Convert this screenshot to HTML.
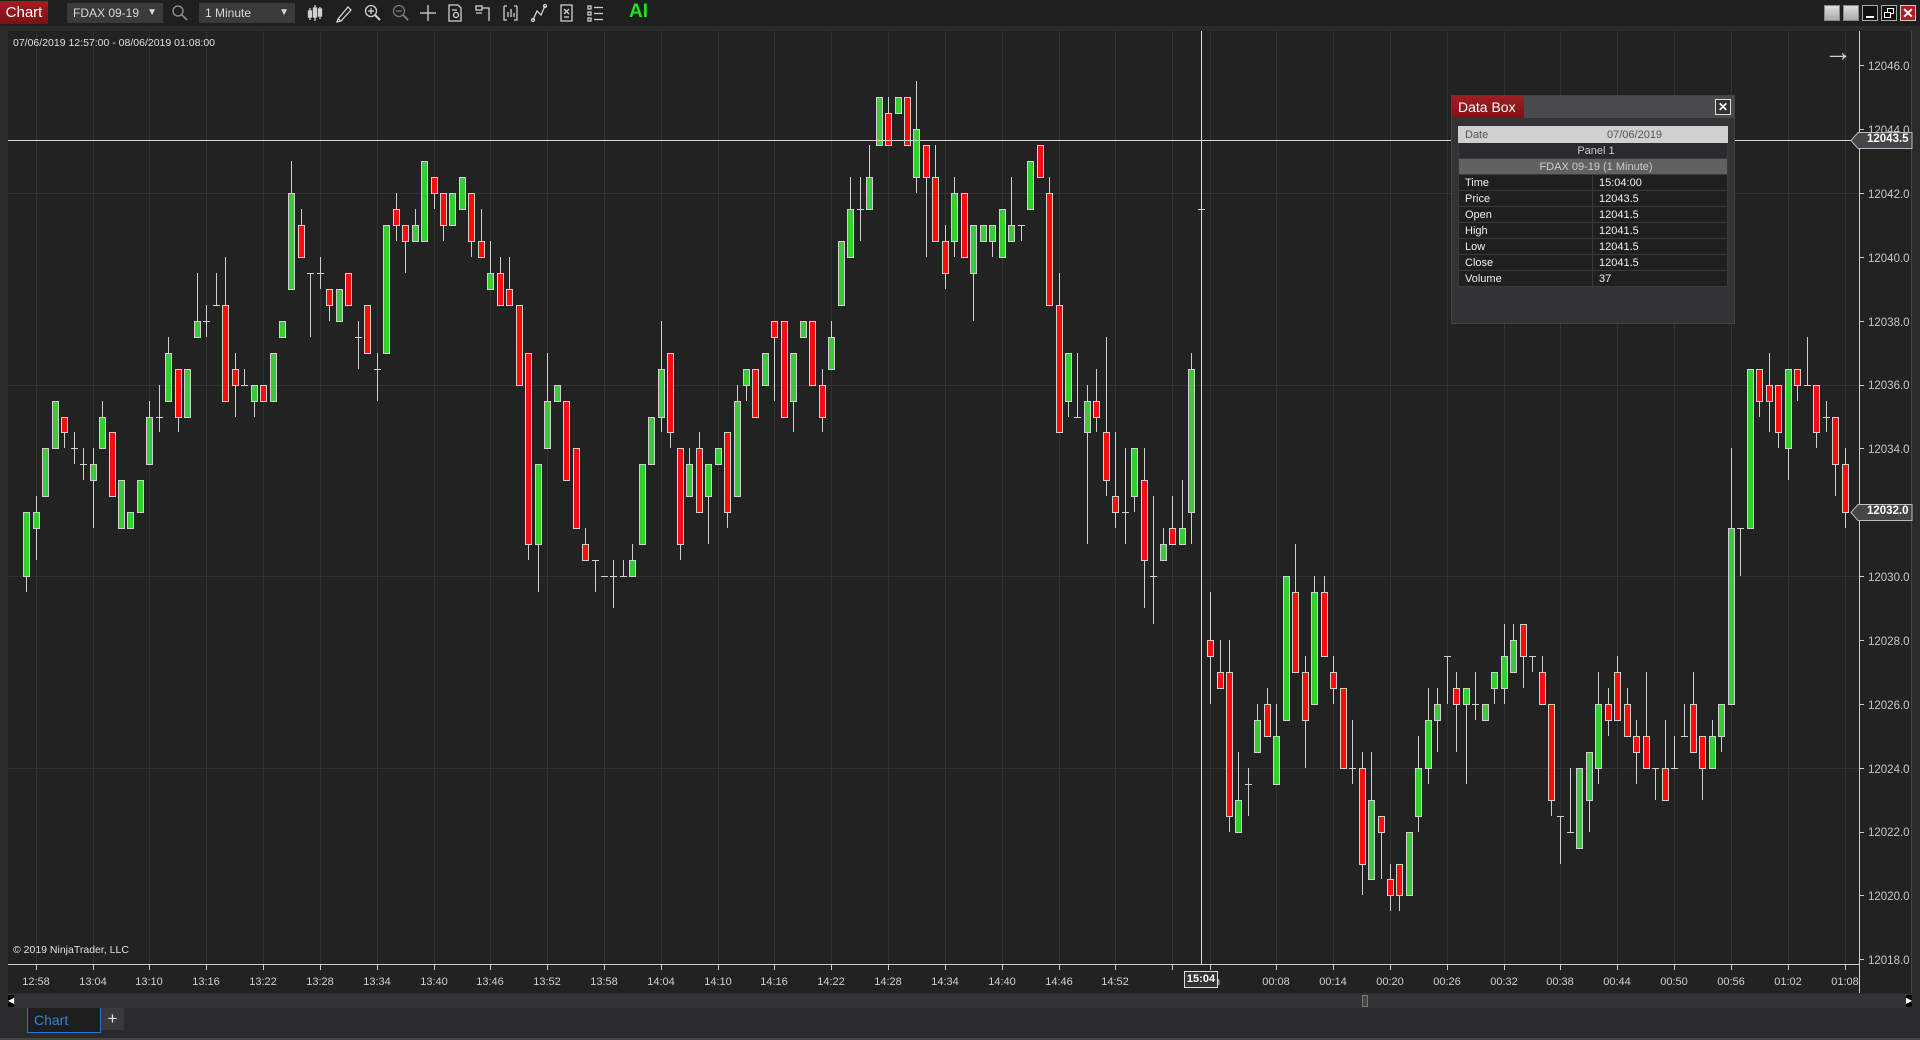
<!DOCTYPE html>
<html><head><meta charset="utf-8"><style>
*{margin:0;padding:0;box-sizing:border-box}
body{width:1920px;height:1040px;overflow:hidden;background:#2b2b2d;font-family:"Liberation Sans",sans-serif;position:relative}
.a{position:absolute}
#tb{left:0;top:0;width:1920px;height:26px;background:#1f1f1f}
.combo{background:#3a3a3c;color:#d8d8d8;font-size:12px;height:20px;line-height:20px;padding-left:6px;top:3px}
.combo span{position:absolute;right:6px;top:0;font-size:10px}
#plot{left:8px;top:31px;width:1904px;height:962px;background:#222222}
.tl{width:50px;text-align:center;font-size:11px;color:#d0d0d0;top:976px}
.pl{left:1868px;font-size:11.5px;color:#c8c8c8;margin-top:3px}
.wb{top:5px;width:16px;height:16px;border:1px solid #888}
table{border-collapse:collapse}
td{border:1px solid #3a3a3c;font-size:11px;height:16px;color:#f0f0f0;padding:0 0 0 6px}
</style></head><body>
<div id="tb" class="a"></div>
<div class="a" style="left:0;top:1px;width:48px;height:23px;background:linear-gradient(#a01e22,#7a1216);color:#fff;font-size:15px;line-height:23px;text-align:center">Chart</div>
<div class="a combo" style="left:67px;width:96px">FDAX 09-19<span>&#9660;</span></div>
<svg class="a" style="left:171px;top:4px" width="18" height="18" viewBox="0 0 18 18"><circle cx="7" cy="7" r="5" fill="none" stroke="#999" stroke-width="1.3"/><line x1="11" y1="11" x2="16" y2="16" stroke="#999" stroke-width="1.5"/></svg>
<div class="a combo" style="left:199px;width:96px">1 Minute<span>&#9660;</span></div>
<svg class="a" style="left:306px;top:3px" width="310" height="20" viewBox="0 0 310 20" fill="none" stroke="#d0d0d0" stroke-width="1.3">
<g><line x1="4" y1="5" x2="4" y2="17"/><rect x="2.5" y="8" width="3" height="6" fill="#d0d0d0"/><line x1="9" y1="2" x2="9" y2="18"/><rect x="7.5" y="5" width="3" height="9" fill="#d0d0d0"/><line x1="14" y1="4" x2="14" y2="16"/><rect x="12.5" y="6" width="3" height="7" fill="#d0d0d0"/></g>
<g transform="translate(28,0)"><path d="M4 16 L14 4 L17 7 L7 18 Z M4 16 L3 19 L7 18"/></g>
<g transform="translate(57,0)"><circle cx="8" cy="8" r="5.5"/><line x1="12" y1="12" x2="17" y2="17" stroke-width="2"/><line x1="5" y1="8" x2="11" y2="8"/><line x1="8" y1="5" x2="8" y2="11"/></g>
<g transform="translate(85,0)" stroke="#777"><circle cx="8" cy="8" r="5.5"/><line x1="12" y1="12" x2="17" y2="17" stroke-width="2"/><line x1="5" y1="8" x2="11" y2="8"/></g>
<g transform="translate(113,0)"><line x1="9" y1="2" x2="9" y2="18"/><line x1="1" y1="10" x2="17" y2="10"/></g>
<g transform="translate(140,0)"><path d="M3 2 H12 L15 5 V18 H3 Z"/><circle cx="10" cy="12" r="2.5"/><line x1="6" y1="7" x2="11" y2="7"/></g>
<g transform="translate(168,0)"><rect x="2" y="3" width="6" height="4"/><path d="M8 5 H15 V18 M2 10 H8"/></g>
<g transform="translate(196,0)"><path d="M2 3 V17 H5 M15 3 V17 H12 M2 3 H5 M15 3 H12"/><line x1="6" y1="14" x2="6" y2="9"/><line x1="9" y1="14" x2="9" y2="6"/><line x1="12" y1="14" x2="12" y2="10"/></g>
<g transform="translate(224,0)"><path d="M3 17 L7 8 L11 12 L15 3"/><circle cx="3" cy="17" r="1.5"/><circle cx="15" cy="3" r="1.5"/></g>
<g transform="translate(252,0)"><path d="M3 2 H14 V18 H3 Z"/><path d="M6 6 L11 11 M11 6 L6 11"/><line x1="6" y1="14" x2="11" y2="14"/></g>
<g transform="translate(280,0)"><rect x="2" y="3" width="3" height="3"/><rect x="2" y="9" width="3" height="3"/><rect x="2" y="15" width="3" height="3"/><line x1="8" y1="4.5" x2="17" y2="4.5"/><line x1="8" y1="10.5" x2="17" y2="10.5"/><line x1="8" y1="16.5" x2="17" y2="16.5"/></g>
</svg>
<div class="a" style="left:629px;top:1px;color:#22e022;font-size:19px;font-weight:bold">AI</div>
<div class="a wb" style="left:1824px;background:linear-gradient(#ddd,#aaa)"></div>
<div class="a wb" style="left:1843px;background:linear-gradient(#ddd,#aaa)"></div>
<div class="a wb" style="left:1862px;background:#111;border-color:#aaa"><div class="a" style="left:3px;top:10px;width:8px;height:2px;background:#fff"></div></div>
<div class="a wb" style="left:1881px;background:#111;border-color:#aaa"><div class="a" style="left:5px;top:2px;width:7px;height:6px;border:1.5px solid #fff"></div><div class="a" style="left:2px;top:6px;width:7px;height:6px;border:1.5px solid #fff;background:#111"></div></div>
<div class="a wb" style="left:1900px;background:#b01e22;border-color:#ccc;color:#fff;font-size:14px;font-weight:bold;line-height:14px;text-align:center">&#10005;</div>

<div id="plot" class="a"></div>
<svg id="ch" class="a" style="left:0;top:0" width="1920" height="1040"></svg>

<div class="a" style="left:13px;top:37px;font-size:10.5px;color:#e0e0e0">07/06/2019 12:57:00 - 08/06/2019 01:08:00</div>
<div class="a" style="left:13px;top:944px;font-size:10.5px;color:#e0e0e0">© 2019 NinjaTrader, LLC</div>
<div class="a" style="left:1824px;top:36px;font-size:28px;color:#d0d0d0">&#8594;</div>

<div class="a pl" style="top:58px">12046.0</div>
<div class="a pl" style="top:122px">12044.0</div>
<div class="a pl" style="top:186px">12042.0</div>
<div class="a pl" style="top:250px">12040.0</div>
<div class="a pl" style="top:314px">12038.0</div>
<div class="a pl" style="top:377px">12036.0</div>
<div class="a pl" style="top:441px">12034.0</div>
<div class="a pl" style="top:569px">12030.0</div>
<div class="a pl" style="top:633px">12028.0</div>
<div class="a pl" style="top:697px">12026.0</div>
<div class="a pl" style="top:761px">12024.0</div>
<div class="a pl" style="top:824px">12022.0</div>
<div class="a pl" style="top:888px">12020.0</div>
<div class="a pl" style="top:952px">12018.0</div>

<svg class="a" style="left:1850px;top:131px" width="64" height="19"><path d="M1 9.5 L8 1.5 H62 V17.5 H8 Z" fill="#444449" stroke="#bbb"/></svg>
<div class="a" style="left:1867px;top:133px;font-size:11.5px;color:#fff;font-weight:bold">12043.5</div>
<svg class="a" style="left:1850px;top:503px" width="64" height="19"><path d="M1 9.5 L8 1.5 H62 V17.5 H8 Z" fill="#444449" stroke="#bbb"/></svg>
<div class="a" style="left:1867px;top:505px;font-size:11.5px;color:#fff;font-weight:bold">12032.0</div>

<div class="a tl" style="left:11px">12:58</div>
<div class="a tl" style="left:68px">13:04</div>
<div class="a tl" style="left:124px">13:10</div>
<div class="a tl" style="left:181px">13:16</div>
<div class="a tl" style="left:238px">13:22</div>
<div class="a tl" style="left:295px">13:28</div>
<div class="a tl" style="left:352px">13:34</div>
<div class="a tl" style="left:409px">13:40</div>
<div class="a tl" style="left:465px">13:46</div>
<div class="a tl" style="left:522px">13:52</div>
<div class="a tl" style="left:579px">13:58</div>
<div class="a tl" style="left:636px">14:04</div>
<div class="a tl" style="left:693px">14:10</div>
<div class="a tl" style="left:749px">14:16</div>
<div class="a tl" style="left:806px">14:22</div>
<div class="a tl" style="left:863px">14:28</div>
<div class="a tl" style="left:920px">14:34</div>
<div class="a tl" style="left:977px">14:40</div>
<div class="a tl" style="left:1034px">14:46</div>
<div class="a tl" style="left:1090px">14:52</div>
<div class="a tl" style="left:1214px;width:20px;text-align:left">n</div>
<div class="a tl" style="left:1184px;width:34px;top:971px;height:17px;line-height:15px;background:#333;border:1px solid #ddd;color:#fff;font-weight:bold">15:04</div>
<div class="a tl" style="left:1251px">00:08</div>
<div class="a tl" style="left:1308px">00:14</div>
<div class="a tl" style="left:1365px">00:20</div>
<div class="a tl" style="left:1422px">00:26</div>
<div class="a tl" style="left:1479px">00:32</div>
<div class="a tl" style="left:1535px">00:38</div>
<div class="a tl" style="left:1592px">00:44</div>
<div class="a tl" style="left:1649px">00:50</div>
<div class="a tl" style="left:1706px">00:56</div>
<div class="a tl" style="left:1763px">01:02</div>
<div class="a tl" style="left:1820px">01:08</div>

<div class="a" style="left:8px;top:994px;width:1904px;height:14px;background:#333336"></div>
<div class="a" style="left:8px;top:995px;width:6px;height:12px;background:#000;color:#fff;font-size:8px;line-height:12px">&#9664;</div>
<div class="a" style="left:1906px;top:995px;width:6px;height:12px;background:#000;color:#fff;font-size:8px;line-height:12px">&#9654;</div>
<div class="a" style="left:1362px;top:995px;width:6px;height:12px;border:1px solid #777;background:#444"></div>

<div class="a" style="left:27px;top:1008px;width:74px;height:25px;border:1px solid #1e7ad6;border-top:none;background:#1e1e1e;color:#2a8ae0;font-size:14px;line-height:24px;padding-left:6px">Chart</div>
<div class="a" style="left:101px;top:1008px;width:23px;height:22px;background:#3a3a3c;color:#ddd;font-size:17px;line-height:22px;text-align:center">+</div>
<div class="a" style="left:0;top:1038px;width:1920px;height:2px;background:#444"></div>

<div class="a" style="left:1451px;top:95px;width:284px;height:229px;background:#333336;border:1px solid #444">
 <div class="a" style="left:0;top:0;width:282px;height:22px;background:#4a4a4c"></div>
 <div class="a" style="left:0;top:0;width:72px;height:22px;background:linear-gradient(#a01e22,#7a1216);color:#fff;font-size:14px;line-height:22px;padding-left:6px">Data Box</div>
 <div class="a" style="left:263px;top:3px;width:16px;height:16px;border:1px solid #ddd;background:#333;color:#fff;font-size:12px;line-height:14px;text-align:center;font-weight:bold">&#10005;</div>
 <table class="a" style="left:6px;top:30px;width:270px">
  <tr><td style="background:#d0d0d0;color:#555;border-color:#d0d0d0;width:134px">Date</td><td style="background:#d0d0d0;color:#555;border-color:#d0d0d0;padding-left:14px">07/06/2019</td></tr>
  <tr><td colspan="2" style="background:#2a2a2c;color:#ccc;text-align:center">Panel 1</td></tr>
  <tr><td colspan="2" style="background:#616161;color:#ccc;text-align:center">FDAX 09-19 (1 Minute)</td></tr>
  <tr><td style="background:#1f1f1f">Time</td><td style="background:#1f1f1f">15:04:00</td></tr>
  <tr><td style="background:#1f1f1f">Price</td><td style="background:#1f1f1f">12043.5</td></tr>
  <tr><td style="background:#1f1f1f">Open</td><td style="background:#1f1f1f">12041.5</td></tr>
  <tr><td style="background:#1f1f1f">High</td><td style="background:#1f1f1f">12041.5</td></tr>
  <tr><td style="background:#1f1f1f">Low</td><td style="background:#1f1f1f">12041.5</td></tr>
  <tr><td style="background:#1f1f1f">Close</td><td style="background:#1f1f1f">12041.5</td></tr>
  <tr><td style="background:#1f1f1f">Volume</td><td style="background:#1f1f1f">37</td></tr>
 </table>
</div>

<script>
var D=[[30,32,29.5,32],[31.5,32.5,30.5,32],[32.5,34,32.5,34],[34,35.5,34,35.5],[35,35,34,34.5],[34,34.5,33.5,34],[33.5,34,33,33.5],[33,34,31.5,33.5],[34,35.5,34,35],[34.5,34.5,32.5,32.5],
[31.5,33,31.5,33],[31.5,32,31.5,32],[32,33,32,33],[33.5,35.5,33.5,35],[35,36,34.5,35],[35.5,37.5,35.5,37],[36.5,36.5,34.5,35],[35,36.5,35,36.5],[37.5,39.5,37.5,38],[38,38.5,37.5,38],
[38.5,39.5,38.5,38.5],[38.5,40,35.5,35.5],[36.5,37,35,36],[36,36.5,36,36],[35.5,36,35,36],[36,36,35.5,35.5],[35.5,37,35.5,37],[37.5,38,37.5,38],[39,43,39,42],[41,41.5,40,40],
[39.5,39.5,37.5,39.5],[39.5,40,39,39.5],[39,39,38,38.5],[38,39,38,39],[39.5,39.5,38.5,38.5],[37.5,38,36.5,37.5],[38.5,38.5,37,37],[36.5,37,35.5,36.5],[37,41,37,41],[41.5,42,40.5,41],
[41,41,39.5,40.5],[40.5,41.5,40.5,41],[40.5,43,40.5,43],[42.5,42.5,41.5,42],[42,42,40.5,41],[41,42,41,42],[41.5,42.5,41.5,42.5],[42,42,40,40.5],[40.5,41.5,40,40],[39,40.5,39,39.5],
[39.5,40,38.5,38.5],[39,40,38.5,38.5],[38.5,38.5,36,36],[37,37,30.5,31],[31,33.5,29.5,33.5],[34,37,34,35.5],[35.5,36,35.5,36],[35.5,35.5,33,33],[34,34,31.5,31.5],[31,31.5,30.5,30.5],
[30.5,30.5,29.5,30.5],[30,30,30,30],[30,30.5,29,30],[30,30.5,30,30],[30,31,30,30.5],[31,33.5,31,33.5],[33.5,35,33.5,35],[35,38,34.5,36.5],[37,37,34,34.5],[34,34,30.5,31],
[32.5,34,32.5,33.5],[34,34.5,32,32],[32.5,33.5,31,33.5],[33.5,34,33.5,34],[34.5,34.5,31.5,32],[32.5,36,32.5,35.5],[36,36.5,35.5,36.5],[36.5,36.5,35,35],[36,37,36,37],[38,38,35.5,37.5],
[38,38,35,35],[35.5,37,34.5,37],[37.5,38,37.5,38],[38,38,36,36],[36,36.5,34.5,35],[36.5,38,36.5,37.5],[38.5,40.5,38.5,40.5],[40,42.5,40,41.5],[41.5,42.5,40.5,41.5],[41.5,43.5,41.5,42.5],
[43.5,45,43.5,45],[44.5,45,43.5,43.5],[44.5,45,44.5,45],[45,45,43.5,43.5],[42.5,45.5,42,44],[43.5,43.5,40,42.5],[42.5,43.5,40.5,40.5],[40.5,41,39,39.5],[40.5,42.5,40,42],[42,42,40,40],
[39.5,41,38,41],[40.5,41,40.5,41],[40.5,41,40,41],[40,41.5,40,41.5],[40.5,42.5,40.5,41],[41,41,40.5,41],[41.5,43,41.5,43],[43.5,43.5,42.5,42.5],[42,42.5,38.5,38.5],[38.5,39.5,34.5,34.5],
[35.5,37,35,37],[35,37,35,35],[34.5,36,31,35.5],[35.5,36.5,34.5,35],[34.5,37.5,32.5,33],[32.5,34.5,31.5,32],[32,34,31,32],[32.5,34,32,34],[33,34,29,30.5],[30,32.5,28.5,30],
[30.5,31.5,30.5,31],[31.5,32.5,31,31],[31,33,31,31.5],[32,37,31,36.5],[41.5,41.5,41.5,41.5],[28,29.5,26,27.5],[27,28,26.5,26.5],[27,28,22,22.5],[22,24.5,22,23],[23.5,24,22.5,23.5],
[24.5,26,24.5,25.5],[26,26.5,25,25],[23.5,26,23.5,25],[25.5,30,25.5,30],[29.5,31,27,27],[27,27.5,24,25.5],[26,30,26,29.5],[29.5,30,27.5,27.5],[27,27.5,26,26.5],[26.5,26.5,24,24],
[24,25.5,23.5,24],[24,24.5,20,21],[20.5,24.5,20.5,23],[22.5,22.5,20.5,22],[20.5,21,19.5,20],[21,21,19.5,20],[20,22,20,22],[22.5,25,22,24],[24,26.5,23.5,25.5],[25.5,26.5,24.5,26],
[27.5,27.5,26,27.5],[26.5,27,24.5,26],[26,26.5,23.5,26.5],[26,27,25.5,26],[25.5,26,25.5,26],[26.5,27,26,27],[26.5,28.5,26,27.5],[27,28.5,27,28],[28.5,28.5,26.5,27.5],[27.5,27.5,27,27.5],
[27,27.5,26,26],[26,26,22.5,23],[22.5,22.5,21,22.5],[22,24,22,22],[21.5,24,21.5,24],[23,24.5,22,24.5],[24,27,23.5,26],[26,26.5,25,25.5],[27,27.5,25.5,25.5],[26,26.5,25,25],
[25,25.5,23.5,24.5],[25,27,24,24],[24,24,23,24],[24,25.5,23,23],[24,25,24,24],[25,26,25,25],[26,27,24.5,24.5],[25,25,23,24],[24,25.5,24,25],[25,26,24.5,26],
[26,34,26,31.5],[31.5,31.5,30,31.5],[31.5,36.5,31.5,36.5],[36.5,36.5,35,35.5],[36,37,34.5,35.5],[36,36,34,34.5],[34,36.5,33,36.5],[36.5,36.5,35.5,36],[36,37.5,36,36],[36,36,34,34.5],
[35,35.5,34.5,35],[35,35,32.5,33.5],[33.5,34,31.5,32]];
var s='';
function Y(p){return 193+(42-p)*31.93;}
function X(i){return 26.3+9.47*i;}
var gx=[];for(var k=0;k<=20;k++)gx.push(1+6*k);gx.push(125);for(k=0;k<=10;k++)gx.push(132+6*k);
gx.forEach(function(i){var x=Math.round(X(i))+0.5;s+='<line x1="'+x+'" y1="31" x2="'+x+'" y2="964" stroke="#323232"/>';
 s+='<line x1="'+x+'" y1="964" x2="'+x+'" y2="970" stroke="#ccc"/>';});
[42,36,30,24].forEach(function(p){var y=Math.round(Y(p))+0.5;s+='<line x1="8" y1="'+y+'" x2="1859" y2="'+y+'" stroke="#323232"/>';});
for(var p=46;p>=18;p-=2){var y=Math.round(Y(p))+0.5;s+='<line x1="1859" y1="'+y+'" x2="1864" y2="'+y+'" stroke="#ccc"/>';}
s+='<line x1="1859.5" y1="31" x2="1859.5" y2="993" stroke="#cfcfcf"/>';
s+='<line x1="8" y1="964.5" x2="1859" y2="964.5" stroke="#cfcfcf"/>';
s+='<line x1="1911.5" y1="31" x2="1911.5" y2="993" stroke="#444"/>';
D.forEach(function(b,i){var x=Math.round(X(i));var o=b[0],h=b[1],l=b[2],c=b[3];
 s+='<line x1="'+(x+0.5)+'" y1="'+Math.round(Y(h))+'" x2="'+(x+0.5)+'" y2="'+Math.round(Y(l))+'" stroke="#d0d0d0"/>';
 if(o==c){var y=Math.round(Y(o))+0.5;s+='<line x1="'+(x-3)+'" y1="'+y+'" x2="'+(x+4)+'" y2="'+y+'" stroke="#d0d0d0"/>';}
 else{var t=Math.round(Y(Math.max(o,c))),bt=Math.round(Y(Math.min(o,c)));
 s+='<rect x="'+(x-2.5)+'" y="'+(t+0.5)+'" width="6" height="'+(bt-t)+'" fill="'+(c>o?'#35cc35':'#ff0a0a')+'" stroke="#d0d0d0"/>';}
});
s+='<line x1="8" y1="140.5" x2="1853" y2="140.5" stroke="#d8d8d8"/>';
s+='<line x1="1201.5" y1="31" x2="1201.5" y2="964" stroke="#d8d8d8"/>';
document.getElementById('ch').innerHTML=s;
</script>
</body></html>
